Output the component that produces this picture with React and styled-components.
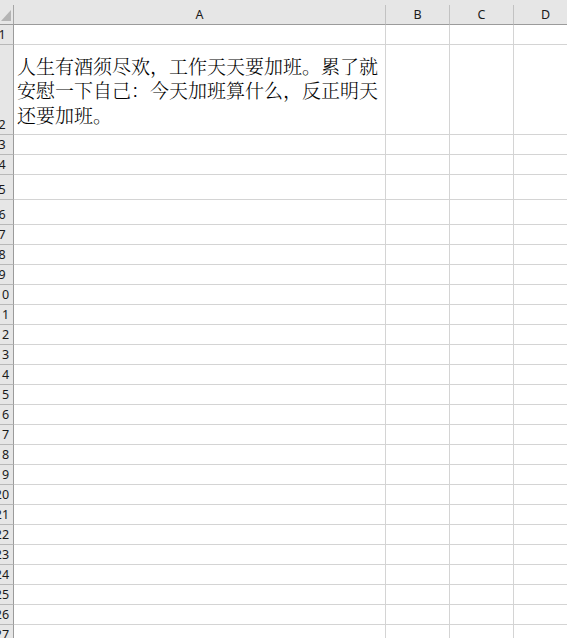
import React from "react";
import styled, { createGlobalStyle } from "styled-components";

const Global = createGlobalStyle`
  html, body { margin: 0; padding: 0; background: #ffffff; overflow: hidden; }
  body { width: 567px; height: 638px; }
`;

const Sheet = styled.div`
  width: 567px;
  height: 638px;
  overflow: hidden;
  display: flex;
  flex-direction: column;
  background: #ffffff;
`;

const TopStrip = styled.div`
  height: 5px;
  flex: none;
  background: #e6e6e6;
`;

const Grid = styled.div`
  display: grid;
  grid-template-columns: 14px 372px 64px 64px 64px 64px;
  width: 642px;
`;

const Corner = styled.div`
  height: 19px;
  background: #e6e6e6;
  border-right: 1px solid #a6a6a6;
  border-bottom: 1px solid #9b9b9b;
  position: relative;
  overflow: hidden;
`;

const CornerTriangle = styled.svg`
  position: absolute;
  left: 1px;
  top: 4px;
`;

const ColHead = styled.div`
  box-sizing: content-box;
  background: #e6e6e6;
  border-right: 1px solid #c2c2c2;
  border-bottom: 1px solid #9b9b9b;
  display: flex;
  align-items: center;
  justify-content: center;
  padding-top: 1px;
  height: 18px;
  font-family: "Noto Sans", "Liberation Sans", sans-serif;
  font-size: 12.5px;
  line-height: 16px;
  color: #1a1a1a;
`;

const RowHead = styled.div`
  height: ${(p) => p.$h - 1}px;
  background: #e6e6e6;
  border-right: 1px solid #9b9b9b;
  border-bottom: 1px solid #b8b8b8;
  display: flex;
  align-items: flex-end;
  justify-content: center;
  overflow: hidden;
  box-sizing: content-box;
  width: 4px;
  padding: 0 9px 0 0;
  font-family: "Noto Sans", "Liberation Sans", sans-serif;
  font-size: 12.5px;
  line-height: 16px;
  color: #1a1a1a;
`;

const RowLabel = styled.span`
  white-space: nowrap;
  flex: none;
  padding-bottom: 1px;
`;

const Cell = styled.div`
  height: ${(p) => p.$h - 1}px;
  border-right: 1px solid #d4d4d4;
  border-bottom: 1px solid #d4d4d4;
  background: #ffffff;
`;

const TextCell = styled(Cell)`
  display: flex;
  flex-direction: column;
  justify-content: flex-end;
  padding: 0 0 7px 3px;
  height: ${(p) => p.$h - 8}px;
  font-family: "Noto Serif CJK SC", "Noto Sans CJK SC", serif;
  font-size: 19px;
  font-weight: 300;
  line-height: 24.5px;
  color: #000000;
  overflow: hidden;
`;

const TextLine = styled.div`
  white-space: nowrap;
`;

const rowHeights = [20, 90, 20, 20, 25, 25];
const rows = Array.from({ length: 27 }, (_, i) => ({
  n: i + 1,
  h: rowHeights[i] ?? 20,
}));

const cols = ["A", "B", "C", "D", "E"];

const lines = [
  "人生有酒须尽欢，工作天天要加班。累了就",
  "安慰一下自己：今天加班算什么，反正明天",
  "还要加班。",
];

export default function App() {
  return (
    <>
      <Global />
      <Sheet>
        <TopStrip />
        <Grid>
          <Corner>
            <CornerTriangle width="11" height="13" viewBox="0 0 11 13">
              <polygon points="10,1 10,12 0,12" fill="#b4b4b4" />
            </CornerTriangle>
          </Corner>
          {cols.map((c) => (
            <ColHead key={c}>{c}</ColHead>
          ))}
          {rows.map((r) => (
            <React.Fragment key={r.n}>
              <RowHead $h={r.h}>
                <RowLabel>{r.n}</RowLabel>
              </RowHead>
              {cols.map((c) =>
                c === "A" && r.n === 2 ? (
                  <TextCell key={c} $h={r.h}>
                    {lines.map((l, i) => (
                      <TextLine key={i}>{l}</TextLine>
                    ))}
                  </TextCell>
                ) : (
                  <Cell key={c} $h={r.h} />
                )
              )}
            </React.Fragment>
          ))}
        </Grid>
      </Sheet>
    </>
  );
}
